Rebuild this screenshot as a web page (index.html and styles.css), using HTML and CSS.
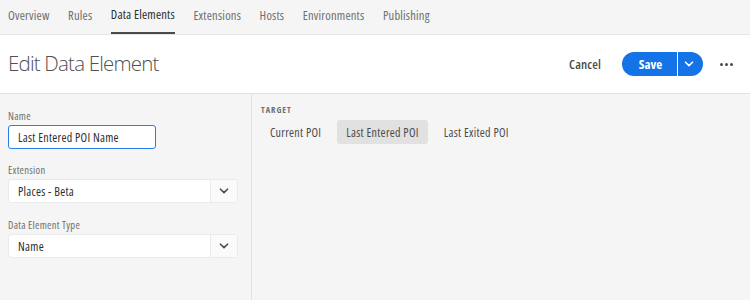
FILE: index.html
```html
<!DOCTYPE html>
<html>
<head>
<meta charset="utf-8">
<link rel="stylesheet" href="styles.css">
</head>
<body>
<div class="app">
  <nav class="tabs">
    <span class="tab">Overview</span>
    <span class="tab">Rules</span>
    <span class="tab active">Data Elements</span>
    <span class="tab">Extensions</span>
    <span class="tab">Hosts</span>
    <span class="tab">Environments</span>
    <span class="tab">Publishing</span>
  </nav>
  <header class="header">
    <h1 class="title">Edit Data Element</h1>
    <div class="actions">
      <span class="cancel">Cancel</span>
      <div class="save-group">
        <span class="save">Save</span>
        <span class="save-menu">
          <svg width="10" height="6" viewBox="0 0 10 6"><path d="M1.5 1.2 L5 4.6 L8.5 1.2" fill="none" stroke="#fff" stroke-width="1.6" stroke-linecap="round" stroke-linejoin="round"/></svg>
        </span>
      </div>
      <span class="more"><i></i><i></i><i></i></span>
    </div>
  </header>
  <main class="body">
    <aside class="side">
      <label class="label">Name</label>
      <div class="input">Last Entered POI Name</div>
      <label class="label">Extension</label>
      <div class="select">
        <span class="select-value">Places - Beta</span>
        <span class="select-btn"><svg width="10" height="6" viewBox="0 0 10 6"><path d="M1.5 1.2 L5 4.6 L8.5 1.2" fill="none" stroke="#4b4b4b" stroke-width="1.6" stroke-linecap="round" stroke-linejoin="round"/></svg></span>
      </div>
      <label class="label">Data Element Type</label>
      <div class="select">
        <span class="select-value">Name</span>
        <span class="select-btn"><svg width="10" height="6" viewBox="0 0 10 6"><path d="M1.5 1.2 L5 4.6 L8.5 1.2" fill="none" stroke="#4b4b4b" stroke-width="1.6" stroke-linecap="round" stroke-linejoin="round"/></svg></span>
      </div>
    </aside>
    <section class="content">
      <div class="heading">TARGET</div>
      <div class="segments">
        <span class="seg">Current POI</span>
        <span class="seg selected">Last Entered POI</span>
        <span class="seg">Last Exited POI</span>
      </div>
    </section>
  </main>
</div>
</body>
</html>
```

FILE: styles.css
```css
* { box-sizing: border-box; }
html, body { margin: 0; padding: 0; }
body {
  font-family: "Open Sans", "Lato", sans-serif;
  font-stretch: 75%;
  color: #4b4b4b;
  background: #f5f5f5;
  width: 750px;
  height: 300px;
  overflow: hidden;
}
.app { display: flex; flex-direction: column; height: 300px; }
.tabs {
  display: flex;
  gap: 18.5px;
  padding: 0 8px;
  height: 35px;
  background: #f5f5f5;
  border-bottom: 1px solid #e6e6e6;
  font-size: 12.5px;
  letter-spacing: 0.2px;
}
.tab {
  display: flex;
  align-items: center;
  height: 31px;
  color: #6e6e6e;
}
.tab.active {
  color: #2c2c2c;
  height: 34px;
  padding-bottom: 3px;
  border-bottom: 2px solid #4b4b4b;
}
.header {
  display: flex;
  align-items: center;
  justify-content: space-between;
  height: 59px;
  background: #fff;
  border-bottom: 1px solid #e1e1e1;
  padding: 0 17px 0 8px;
}
.title {
  margin: 0 0 3px;
  font-weight: 300;
  font-size: 20.5px;
  font-stretch: 100%;
  letter-spacing: -0.8px;
  color: #505050;
}
.actions { display: flex; align-items: center; }
.cancel {
  font-size: 13px;
  font-weight: 600;
  letter-spacing: 0.1px;
  color: #4b4b4b;
  margin-right: 21px;
}
.save-group {
  display: flex;
  height: 24px;
  border-radius: 12px;
  overflow: hidden;
  background: #1473e6;
}
.save {
  display: flex;
  align-items: center;
  justify-content: center;
  width: 55px;
  color: #fff;
  font-size: 13px;
  font-weight: 700;
  padding-left: 2px;
}
.save-menu {
  display: flex;
  align-items: center;
  justify-content: center;
  width: 26px;
  border-left: 1.5px solid #fff;
  padding-right: 3px;
}
.more { display: flex; gap: 2px; margin-left: 17px; }
.more i { width: 3px; height: 3px; border-radius: 50%; background: #4b4b4b; }
.body { display: flex; flex: 1; }
.side {
  width: 252px;
  border-right: 1px solid #e1e1e1;
  padding: 15px 13px 0 8px;
  display: flex;
  flex-direction: column;
}
.label {
  font-size: 10.5px;
  letter-spacing: 0.3px;
  color: #6e6e6e;
  height: 14px;
  margin-bottom: 2px;
}
.input {
  width: 148px;
  height: 24px;
  border: 1px solid #2680eb;
  border-radius: 3px;
  background: #fff;
  font-size: 12px;
  letter-spacing: 0.3px;
  color: #2c2c2c;
  padding-left: 9px;
  display: flex;
  align-items: center;
  margin-bottom: 14px;
}
.select {
  display: flex;
  height: 24px;
  border: 1px solid #ebebeb;
  border-radius: 3px;
  background: #fff;
  margin-bottom: 15px;
}
.select-value {
  flex: 1;
  display: flex;
  align-items: center;
  font-size: 12px;
  letter-spacing: 0.3px;
  color: #2c2c2c;
  padding-left: 9px;
  border-right: 1px solid #ebebeb;
}
.select-btn {
  width: 26px;
  display: flex;
  align-items: center;
  justify-content: center;
  background: #fafafa;
}
.content { flex: 1; padding: 10px 9px; }
.heading {
  font-size: 8.5px;
  font-weight: 700;
  letter-spacing: 1px;
  color: #6e6e6e;
  margin-bottom: 5px;
}
.segments { display: flex; }
.seg {
  display: flex;
  align-items: center;
  height: 24px;
  padding: 0 9px;
  font-size: 12px;
  letter-spacing: 0.3px;
  color: #4b4b4b;
  border-radius: 3px;
  margin-right: 7px;
}
.seg.selected { background: #e1e1e1; }
```
